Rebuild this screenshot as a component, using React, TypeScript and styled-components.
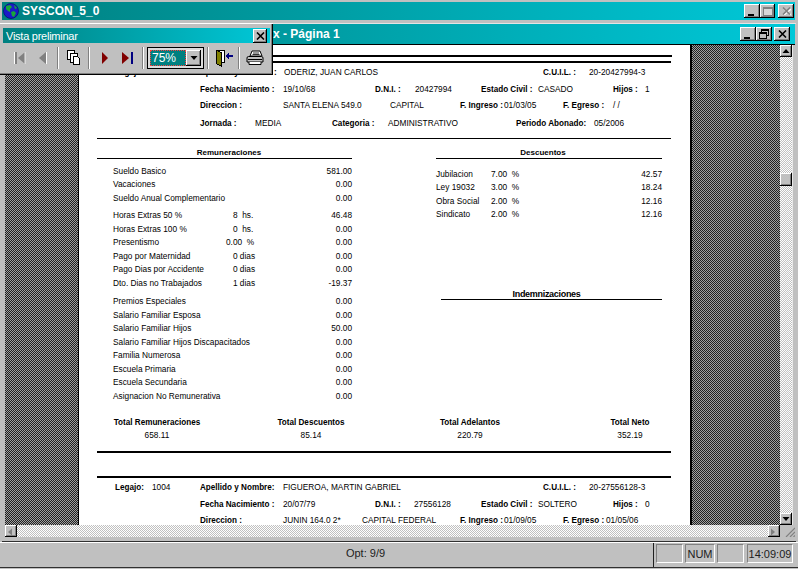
import React from "react";
import styled, { createGlobalStyle } from "styled-components";

const Global = createGlobalStyle`
  html, body { margin: 0; padding: 0; background: #c0c0c0; }
  #root { width: 798px; height: 569px; }
`;

const raised = `
  background: #c0c0c0;
  box-shadow: inset -1px -1px 0 #000, inset 1px 1px 0 #fff, inset -2px -2px 0 #808080;
`;
const checker = (a: string, b: string) =>
  `background: repeating-conic-gradient(${a} 0 25%, ${b} 0 50%) 0 0 / 2px 2px;`;
const titleGradient = `background: linear-gradient(90deg, #008080 0%, #00c8d8 100%);`;
const BOLD_SIZE = 8.15;

const Desktop = styled.div`
  position: relative;
  width: 798px;
  height: 569px;
  overflow: hidden;
  background: #c0c0c0;
  display: flex;
  flex-direction: column;
  font-family: "Liberation Sans", Arial, sans-serif;
`;
const MainTitle = styled.div`
  height: 18px;
  margin: 2px 3px 0 2px;
  padding-left: 1px;
  display: flex;
  align-items: center;
  ${titleGradient}
`;
const MainTitleText = styled.span`
  margin-left: 3px;
  color: #fff;
  font-size: 12px;
  font-weight: 700;
  flex: 1;
`;
const WinButtons = styled.div<{ $right: number }>`
  display: flex;
  margin-right: ${p => p.$right}px;
`;
const WinButton = styled.div<{ $gap?: number; $w?: number }>`
  ${raised}
  width: ${p => p.$w ?? 16}px;
  height: 14px;
  margin-left: ${p => p.$gap ?? 0}px;
  display: flex;
  align-items: center;
  justify-content: center;
`;
const ChildWindow = styled.div`
  flex: 1;
  min-height: 0;
  display: flex;
  flex-direction: column;
  margin: 3px 2px 0 2px;
  padding: 0 0 4px 0;
  border-top: 1px solid #e4e4e4;
  border-bottom: 1px solid #303030;
`;
const ChildTitle = styled.div`
  height: 20px;
  margin: 0 1px 0 1px;
  padding-left: 270px;
  display: flex;
  align-items: center;
  ${titleGradient}
  border-bottom: 1px solid #000;
`;
const ChildTitleText = styled.span`
  flex: 1;
  color: #fff;
  font-size: 12px;
  font-weight: 700;
`;
const ViewRow = styled.div`
  flex: 1;
  min-height: 0;
  display: flex;
  margin-left: 3px;
  margin-right: 1px;
`;
const Gutter = styled.div<{ $w: number }>`
  width: ${p => p.$w}px;
  flex-shrink: 0;
  ${checker("#202020", "#a0a0a0")}
`;
const VScroll = styled.div`
  width: 12px;
  flex-shrink: 0;
  display: flex;
  flex-direction: column;
  justify-content: space-between;
  position: relative;
  ${checker("#ffffff", "#c0c0c0")}
  border-right: 1px solid #e8e8e8;
  margin-right: 2px;
`;
const ScrollBtn = styled.div<{ $w?: number; $h?: number }>`
  ${raised}
  width: ${p => p.$w ?? 12}px;
  height: ${p => p.$h ?? 12}px;
  flex-shrink: 0;
  display: flex;
  align-items: center;
  justify-content: center;
`;
const Thumb = styled.div`
  ${raised}
  position: absolute;
  left: 0;
  top: 128px;
  width: 12px;
  height: 13px;
`;
const HScrollRow = styled.div`
  height: 12px;
  flex-shrink: 0;
  margin-left: 3px;
  display: flex;
  justify-content: space-between;
  ${checker("#ffffff", "#c0c0c0")}
  margin-right: 1px;
`;
const Grip = styled.div`
  width: 15px;
  height: 12px;
  background: #c0c0c0;
  display: flex;
  align-items: flex-end;
  justify-content: flex-end;
`;
const HRight = styled.div`
  display: flex;
`;

/* Report page */
const Page = styled.div`
  width: 614px;
  flex-shrink: 0;
  background: #fff;
  border-left: 1px solid #000;
  border-right: 2px solid #000;
  overflow: hidden;
  padding-top: 10px;
  box-sizing: border-box;
  color: #000;
  font-size: 8.3px;
`;
const Rule = styled.div<{ $t: number; $mt?: number; $mr?: number }>`
  height: ${p => p.$t}px;
  background: #000;
  margin: ${p => p.$mt ?? 0}px ${p => p.$mr ?? 19}px 0 18px;
`;
const Row = styled.div<{ $h: number }>`
  height: ${p => p.$h}px;
  line-height: ${p => p.$h}px;
  display: flex;
  align-items: baseline;
  white-space: nowrap;
`;
const Cell = styled.span<{ $w: number; $bold?: boolean }>`
  width: ${p => p.$w}px;
  flex-shrink: 0;
  font-weight: ${p => (p.$bold ? 700 : 400)};
  font-size: ${p => (p.$bold ? BOLD_SIZE : 8.3)}px;
  overflow: visible;
`;
const Columns = styled.div`
  display: flex;
  padding-left: 18px;
`;
const LeftCol = styled.div`
  width: 255px;
  flex-shrink: 0;
`;
const RightCol = styled.div`
  width: 226px;
  margin-left: 84px;
  flex-shrink: 0;
`;
const SectionHead = styled.div<{ $strong?: boolean; $mt?: number; $ml?: number; $pl?: number; $pr?: number }>`
  height: 10px;
  line-height: 10px;
  margin-top: ${p => p.$mt ?? 9}px;
  margin-left: ${p => p.$ml ?? 0}px;
  padding-left: ${p => p.$pl ?? 0}px;
  padding-right: ${p => p.$pr ?? 0}px;
  text-align: center;
  border-bottom: 1px solid #000;
  font-weight: 700;
  font-size: ${p => (p.$strong ? 9 : 8)}px;
  letter-spacing: ${p => (p.$strong ? -0.3 : 0)}px;
`;
const Group = styled.div<{ $mt: number }>`
  margin-top: ${p => p.$mt}px;
`;
const LineRow = styled.div<{ $cols: string; $indent?: number }>`
  height: 13.5px;
  line-height: 13.5px;
  display: grid;
  grid-template-columns: ${p => p.$cols};
  padding-left: ${p => p.$indent ?? 0}px;
  white-space: nowrap;
`;
const Amount = styled.span`
  text-align: right;
`;
const Qty = styled.span`
  white-space: pre;
`;
const Totals = styled.div`
  display: flex;
  margin-top: 13px;
`;
const TotalCell = styled.div<{ $w: number }>`
  width: ${p => p.$w}px;
  flex-shrink: 0;
  text-align: center;
  line-height: 12.5px;
`;
const TotalLabel = styled.div`
  font-weight: 700;
  font-size: ${BOLD_SIZE}px;
  padding-top: 1px;
  margin-bottom: -1px;
`;

/* Floating toolbar */
const Palette = styled.div`
  position: absolute;
  left: 0;
  top: 23px;
  width: 273px;
  height: 52px;
  box-sizing: border-box;
  background: #c0c0c0;
  border-top: 1px solid #fff;
  box-shadow: inset -1px -1px 0 #000, inset -2px -2px 0 #808080;
  padding: 4px 3px 0 3px;
`;
const PaletteTitle = styled.div`
  height: 15px;
  padding: 0 3px;
  display: flex;
  align-items: center;
  justify-content: space-between;
  ${titleGradient}
  color: #fff;
  font-size: 11px;
  letter-spacing: -0.25px;
`;
const ToolRow = styled.div`
  display: flex;
  align-items: center;
  height: 27px;
  padding-left: 5px;
  margin-top: 1px;
`;
const Tool = styled.div`
  width: 23px;
  height: 24px;
  flex-shrink: 0;
  display: flex;
  align-items: center;
  justify-content: center;
`;
const ToolSep = styled.div`
  width: 1px;
  height: 22px;
  margin: 0 3px;
  flex-shrink: 0;
  background: #808080;
  border-right: 1px solid #fff;
`;
const Combo = styled.div`
  width: 57px;
  height: 22px;
  flex-shrink: 0;
  box-sizing: border-box;
  border: 1px solid #000;
  background: #dcdcdc;
  padding: 2px;
  display: flex;
`;
const ComboValue = styled.div`
  flex: 1;
  background: #008080;
  outline: 1px dotted #ff4040;
  outline-offset: -1px;
  color: #fff;
  font-size: 12px;
  line-height: 16px;
  padding-left: 2px;
`;
const ComboDrop = styled.div`
  ${raised}
  width: 15px;
  display: flex;
  align-items: center;
  justify-content: center;
`;

/* Status bar */
const StatusBar = styled.div`
  height: 24px;
  flex-shrink: 0;
  display: flex;
  align-items: flex-start;
  margin-bottom: 1px;
  padding-right: 5px;
  border-top: 1px solid #fff;
  border-bottom: 1px solid #303030;
  font-size: 11px;
  color: #202020;
`;
const StatusMain = styled.div`
  flex: 1;
  text-align: center;
  padding-left: 78px;
  height: 100%;
  line-height: 21px;
  border-right: 1px solid #202020;
`;
const StatusPanel = styled.div<{ $w: number; $gap?: number }>`
  width: ${p => p.$w}px;
  height: 19px;
  line-height: 18px;
  margin-top: 1px;
  margin-left: ${p => p.$gap ?? 2}px;
  text-align: center;
  box-sizing: border-box;
  border: 1px solid;
  border-color: #808080 #fff #fff #808080;
  flex-shrink: 0;
`;

/* Icons */
const Tri = ({ dir, fill }: { dir: "u" | "d" | "l" | "r"; fill: string }) => {
  const pts = {
    u: "0.5,5 4,1 7.5,5",
    d: "0.5,1 7.5,1 4,5",
    l: "5,0.5 5,7.5 1,4",
    r: "1,0.5 1,7.5 5,4",
  }[dir];
  return (
    <svg width="8" height="8" viewBox="0 0 8 6" aria-hidden>
      <polygon points={pts} fill={fill} />
    </svg>
  );
};
const Globe = () => (
  <svg width="16" height="16" viewBox="0 0 16 16" aria-hidden>
    <circle cx="8" cy="8" r="7.5" fill="#1a1ac8" />
    <path d="M3 3 L7 2 L9 4 L7 6 L7 9 L5 8 L3 6 Z" fill="#18a838" />
    <path d="M8 9 L11 8 L13 10 L11 14 L9 13 Z" fill="#18a838" />
    <path d="M11 2 L14 5 L12 6 Z" fill="#18a838" />
    <circle cx="8" cy="8" r="7.5" fill="none" stroke="#000060" strokeWidth="0.6" />
  </svg>
);
const First = () => (
  <svg width="13" height="14" viewBox="0 0 13 14" aria-hidden>
    <rect x="1" y="1" width="1" height="12" fill="#fff" />
    <rect x="2" y="1" width="2" height="12" fill="#808080" />
    <polygon points="12,1 12,13 5,7" fill="#808080" />
    <path d="M12 1V13" stroke="#fff" strokeWidth="0.8" />
  </svg>
);
const Prev = () => (
  <svg width="10" height="14" viewBox="0 0 10 14" aria-hidden>
    <polygon points="8,1 8,13 1,7" fill="#808080" />
    <path d="M8.5 1V13" stroke="#fff" />
  </svg>
);
const Pages = () => (
  <svg width="15" height="15" viewBox="0 0 15 15" aria-hidden shapeRendering="crispEdges">
    <rect x="1.5" y="0.5" width="7" height="9" fill="#fff" stroke="#000" />
    <rect x="4.5" y="3.5" width="7" height="9" fill="#fff" stroke="#000" />
    <path d="M7.5 6.5H11.5L13.5 8.5V14.5H7.5Z" fill="#fff" stroke="#000" />
  </svg>
);
const Next = () => (
  <svg width="8" height="14" viewBox="0 0 8 14" aria-hidden>
    <polygon points="1,1 7,7 1,13" fill="#800000" />
  </svg>
);
const Last = () => (
  <svg width="12" height="14" viewBox="0 0 12 14" aria-hidden>
    <polygon points="0,1 7,7 0,13" fill="#800000" />
    <rect x="9" y="1" width="2" height="12" fill="#000080" />
  </svg>
);
const ExitDoor = () => (
  <svg width="18" height="18" viewBox="0 0 18 18" aria-hidden shapeRendering="crispEdges">
    <path d="M1.5 1.5H9.5V13.5H1.5Z" fill="#fff" stroke="#000" />
    <path d="M1.5 1.5L6.5 3.5V17.5L1.5 14.5Z" fill="#808000" stroke="#000" />
    <polygon points="11,7 14,3.5 14,6 17.5,6 17.5,8 14,8 14,10.5" fill="#000080" />
  </svg>
);
const Printer = () => (
  <svg width="18" height="16" viewBox="0 0 18 16" aria-hidden>
    <path d="M6 1H14L16 6H4Z" fill="#fff" stroke="#000" />
    <path d="M7 3H13M6.5 4.5H13.5" stroke="#000" strokeWidth="0.8" />
    <path d="M2.5 6.5H15.5Q17 6.5 17 8V12H1V8Q1 6.5 2.5 6.5Z" fill="#c0c0c0" stroke="#000" />
    <path d="M3 12V14.5H15V12" fill="#fff" stroke="#000" />
    <path d="M2 9.5H16" stroke="#000" />
  </svg>
);
const MinIcon = () => (
  <svg width="10" height="9" viewBox="0 0 10 9" aria-hidden shapeRendering="crispEdges">
    <rect x="1" y="7" width="6" height="2" fill="#000" />
  </svg>
);
const MaxIcon = () => (
  <svg width="10" height="9" viewBox="0 0 10 9" aria-hidden shapeRendering="crispEdges">
    <rect x="0.5" y="0.5" width="9" height="8" fill="#d8d8d8" stroke="#808080" />
    <rect x="0" y="0" width="10" height="2" fill="#808080" />
  </svg>
);
const RestoreIcon = () => (
  <svg width="10" height="10" viewBox="0 0 10 10" aria-hidden shapeRendering="crispEdges">
    <path d="M2.5 2.5V0.5H9.5V6.5H7.5" fill="none" stroke="#000" />
    <rect x="2" y="0" width="8" height="1.6" fill="#000" />
    <rect x="0.5" y="3.5" width="7" height="6" fill="#c0c0c0" stroke="#000" />
    <rect x="0" y="3" width="8" height="1.6" fill="#000" />
  </svg>
);
const CloseIcon = ({ color = "#000", shadow }: { color?: string; shadow?: boolean }) => (
  <svg width="9" height="8" viewBox="0 0 9 8" aria-hidden>
    {shadow && <path d="M2 2L9 8M9 2L2 8" stroke="#fff" strokeWidth="1.4" />}
    <path d="M1 0.5L8 7.5M8 0.5L1 7.5" stroke={color} strokeWidth="1.6" />
  </svg>
);
const GripIcon = () => (
  <svg width="12" height="11" viewBox="0 0 12 11" aria-hidden>
    <path d="M3 11L12 2M7 11L12 6M10.5 11L12 9.5" stroke="#808080" strokeWidth="1.2" />
  </svg>
);

/* Data */
type C = [number, string, boolean?];
const ROW_START = 79;
const Fields = ({ h, cells }: { h: number; cells: C[] }) => (
  <Row $h={h}>
    <Cell $w={cells[0][0] - ROW_START} />
    {cells.map((c, i) => (
      <Cell key={i} $w={(cells[i + 1]?.[0] ?? c[0] + 80) - c[0]} $bold={c[2]}>
        {c[1]}
      </Cell>
    ))}
  </Row>
);

const left: [string, string, string][][] = [
  [
    ["Sueldo Basico", "", "581.00"],
    ["Vacaciones", "", "0.00"],
    ["Sueldo Anual Complementario", "", "0.00"],
  ],
  [
    ["Horas Extras 50 %", "   8  hs.", "46.48"],
    ["Horas Extras 100 %", "   0  hs.", "0.00"],
    ["Presentismo", "0.00  %", "0.00"],
    ["Pago por Maternidad", "   0 dias", "0.00"],
    ["Pago Dias por Accidente", "   0 dias", "0.00"],
    ["Dto. Dias no Trabajados", "   1 dias", "-19.37"],
  ],
  [
    ["Premios Especiales", "", "0.00"],
    ["Salario Familiar Esposa", "", "0.00"],
    ["Salario Familiar Hijos", "", "50.00"],
    ["Salario Familiar Hijos Discapacitados", "", "0.00"],
    ["Familia Numerosa", "", "0.00"],
    ["Escuela Primaria", "", "0.00"],
    ["Escuela Secundaria", "", "0.00"],
    ["Asignacion No Remunerativa", "", "0.00"],
  ],
];
const right: [string, string, string][] = [
  ["Jubilacion", "7.00  %", "42.57"],
  ["Ley 19032", "3.00  %", "18.24"],
  ["Obra Social", "2.00  %", "12.16"],
  ["Sindicato", "2.00  %", "12.16"],
];
const totals: [number, string, string][] = [
  [156, "Total Remuneraciones", "658.11"],
  [152, "Total Descuentos", "85.14"],
  [166, "Total Adelantos", "220.79"],
  [154, "Total Neto", "352.19"],
];

export default function App() {
  return (
    <Desktop>
      <Global />
      <MainTitle>
        <Globe />
        <MainTitleText>SYSCON_5_0</MainTitleText>
        <WinButtons $right={1}>
          <WinButton><MinIcon /></WinButton>
          <WinButton $w={15}><MaxIcon /></WinButton>
          <WinButton $gap={3}><CloseIcon color="#808080" shadow /></WinButton>
        </WinButtons>
      </MainTitle>

      <ChildWindow>
        <ChildTitle>
          <ChildTitleText>x - Página 1</ChildTitleText>
          <WinButtons $right={5}>
            <WinButton><MinIcon /></WinButton>
            <WinButton><RestoreIcon /></WinButton>
            <WinButton $gap={2}><CloseIcon /></WinButton>
          </WinButtons>
        </ChildTitle>

        <ViewRow>
          <Gutter $w={73} />
          <Page>
            <Rule $t={2} $mr={18} />
            <Rule $t={2} $mt={4} />
            <Fields h={18} cells={[[115, "Legajo:", true], [152, "1003"], [200, "Apellido y Nombre :", true], [284, "ODERIZ, JUAN CARLOS"], [543, "C.U.I.L. :", true], [589, "20-20427994-3"]]} />
            <Fields h={16} cells={[[200, "Fecha Nacimiento :", true], [283, "19/10/68"], [375, "D.N.I. :", true], [415, "20427994"], [481, "Estado Civil :", true], [538, "CASADO"], [613, "Hijos :", true], [645, "1"]]} />
            <Fields h={16} cells={[[200, "Direccion :", true], [283, "SANTA ELENA 549.0"], [390, "CAPITAL"], [460, "F. Ingreso :", true], [504, "01/03/05"], [563, "F. Egreso :", true], [613, "/ /"]]} />
            <Fields h={20} cells={[[200, "Jornada :", true], [255, "MEDIA"], [332, "Categoria :", true], [388, "ADMINISTRATIVO"], [516, "Periodo Abonado:", true], [594, "05/2006"]]} />
            <Rule $t={1} $mt={5} />
            <Columns>
              <LeftCol>
                <SectionHead $pl={9}>Remuneraciones</SectionHead>
                {left.map((g, i) => (
                  <Group key={i} $mt={[5.5, 4, 5][i]}>
                    {g.map(r => (
                      <LineRow key={r[0]} $cols="113px 30px 1fr" $indent={16}>
                        <span>{r[0]}</span>
                        <Qty>{r[1]}</Qty>
                        <Amount>{r[2]}</Amount>
                      </LineRow>
                    ))}
                  </Group>
                ))}
              </LeftCol>
              <RightCol>
                <SectionHead $pr={12}>Descuentos</SectionHead>
                <Group $mt={8.5}>
                  {right.map(r => (
                    <LineRow key={r[0]} $cols="55px 40px 1fr">
                      <span>{r[0]}</span>
                      <Qty>{r[1]}</Qty>
                      <Amount>{r[2]}</Amount>
                    </LineRow>
                  ))}
                </Group>
                <SectionHead $strong $mt={67} $ml={5} $pr={10}>Indemnizaciones</SectionHead>
              </RightCol>
            </Columns>
            <Totals>
              {totals.map(t => (
                <TotalCell key={t[1]} $w={t[0]}>
                  <TotalLabel>{t[1]}</TotalLabel>
                  <div>{t[2]}</div>
                </TotalCell>
              ))}
            </Totals>
            <Rule $t={2} $mt={10} />
            <Rule $t={2} $mt={23} />
            <Fields h={18} cells={[[115, "Legajo:", true], [152, "1004"], [200, "Apellido y Nombre:", true], [283, "FIGUEROA, MARTIN GABRIEL"], [543, "C.U.I.L. :", true], [589, "20-27556128-3"]]} />
            <Fields h={16} cells={[[200, "Fecha Nacimiento :", true], [283, "20/07/79"], [375, "D.N.I. :", true], [414, "27556128"], [481, "Estado Civil :", true], [538, "SOLTERO"], [613, "Hijos :", true], [645, "0"]]} />
            <Fields h={16} cells={[[200, "Direccion :", true], [283, "JUNIN  164.0 2*"], [362, "CAPITAL FEDERAL"], [460, "F. Ingreso :", true], [504, "01/09/05"], [563, "F. Egreso :", true], [606, "01/05/06"]]} />
          </Page>
          <Gutter $w={88} />
          <VScroll>
            <ScrollBtn><Tri dir="u" fill="#000" /></ScrollBtn>
            <Thumb />
            <ScrollBtn><Tri dir="d" fill="#000" /></ScrollBtn>
          </VScroll>
        </ViewRow>
        <HScrollRow>
          <ScrollBtn><Tri dir="l" fill="#808080" /></ScrollBtn>
          <HRight>
            <ScrollBtn><Tri dir="r" fill="#808080" /></ScrollBtn>
            <Grip><GripIcon /></Grip>
          </HRight>
        </HScrollRow>
      </ChildWindow>

      <StatusBar>
        <StatusMain>Opt: 9/9</StatusMain>
        <StatusPanel $w={27}> </StatusPanel>
        <StatusPanel $w={30}>NUM</StatusPanel>
        <StatusPanel $w={27}> </StatusPanel>
        <StatusPanel $w={46} $gap={3}>14:09:09</StatusPanel>
      </StatusBar>

      <Palette>
        <PaletteTitle>
          Vista preliminar
          <WinButton $w={14}><CloseIcon /></WinButton>
        </PaletteTitle>
        <ToolRow>
          <Tool><First /></Tool>
          <Tool><Prev /></Tool>
          <ToolSep />
          <Tool><Pages /></Tool>
          <ToolSep />
          <Tool><Next /></Tool>
          <Tool><Last /></Tool>
          <ToolSep />
          <Combo>
            <ComboValue>75%</ComboValue>
            <ComboDrop><Tri dir="d" fill="#000" /></ComboDrop>
          </Combo>
          <ToolSep />
          <Tool><ExitDoor /></Tool>
          <ToolSep />
          <Tool><Printer /></Tool>
        </ToolRow>
      </Palette>
    </Desktop>
  );
}
